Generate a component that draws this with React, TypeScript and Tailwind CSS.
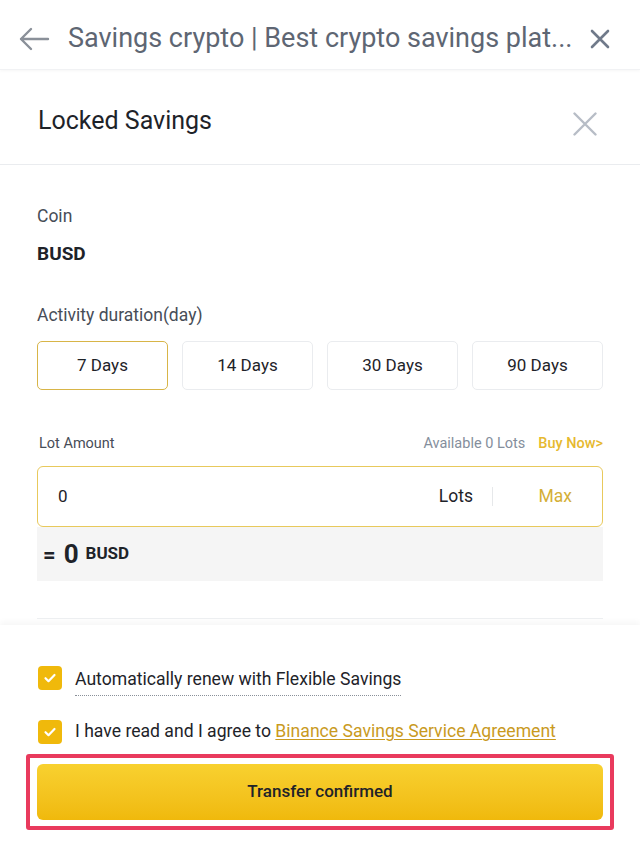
import React, { useState } from 'react';

const durations = ['7 Days', '14 Days', '30 Days', '90 Days'];

function Check() {
  return (
    <span className="flex h-6 w-6 shrink-0 items-center justify-center rounded-[4px] bg-[#f0b90b]">
      <svg width="14" height="14" viewBox="0 0 14 14" fill="none">
        <path d="M2.5 7.2l3 3 6-6.2" stroke="#fff" strokeWidth="2.2" strokeLinecap="round" strokeLinejoin="round" />
      </svg>
    </span>
  );
}

function App() {
  const [duration, setDuration] = useState('7 Days');

  return (
    <div className="flex h-[841px] w-[640px] flex-col overflow-hidden bg-white font-['Roboto','Noto_Sans',sans-serif]">
      <header className="flex h-[70px] shrink-0 items-center border-b border-[#f1f2f4] pl-[18px] pr-[30px] pt-[8px] shadow-[0_1px_3px_rgba(0,0,0,0.04)]">
        <svg width="32" height="24" viewBox="0 0 32 24" fill="none" className="shrink-0">
          <path d="M30 12H3M13 2L3 12l10 10" stroke="#8a9099" strokeWidth="2.4" strokeLinecap="round" strokeLinejoin="round" />
        </svg>
        <h1 className="ml-[18px] flex-1 whitespace-nowrap text-[27px] leading-none text-[#5e6673]">
          Savings crypto | Best crypto savings plat...
        </h1>
        <svg width="20" height="20" viewBox="0 0 20 20" className="shrink-0">
          <path d="M2 2l16 16M18 2L2 18" stroke="#707a8a" strokeWidth="2.6" strokeLinecap="round" />
        </svg>
      </header>

      <div className="flex h-[95px] shrink-0 items-center justify-between border-b border-[#eaecef] pl-[38px] pr-[43px]">
        <h2 className="pt-[8px] text-[25px] text-[#1e2329]">Locked Savings</h2>
        <svg width="24" height="24" viewBox="0 0 24 24" className="mt-[14px]">
          <path d="M1.5 1.5l21 21M22.5 1.5l-21 21" stroke="#b7bdc6" strokeWidth="2.4" strokeLinecap="round" />
        </svg>
      </div>

      <div className="flex flex-1 flex-col px-[37px]">
        <div className="mt-[40px] text-[17.5px] leading-[22px] text-[#474d57]">Coin</div>
        <div className="mt-[15px] text-[19px] font-bold leading-[24px] text-[#1e2329]">BUSD</div>

        <div className="mt-[38px] text-[17.5px] leading-[22px] text-[#474d57]">Activity duration(day)</div>
        <div className="mt-[15px] grid grid-cols-4 gap-[14px]">
          {durations.map(d => (
            <button
              key={d}
              onClick={() => setDuration(d)}
              className={`flex h-[49px] items-center justify-center rounded-[5px] border-[1.5px] text-[17px] text-[#1e2329] ${
                d === duration ? 'border-[#d8b548]' : 'border-[#eaecef]'
              }`}
            >
              {d}
            </button>
          ))}
        </div>

        <div className="mt-[44px] flex items-center justify-between text-[14.5px] leading-[20px]">
          <span className="pl-[2px] text-[#474d57]">Lot Amount</span>
          <span className="text-[#848e9c]">
            Available 0 Lots
            <span className="ml-[13px] font-medium text-[#e6b92f]">Buy Now&gt;</span>
          </span>
        </div>
        <div className="mt-[12px] flex h-[61px] items-center rounded-[6px] border-[1.5px] border-[#e8c95c] pl-[20px] pr-[30px]">
          <span className="flex-1 text-[17px] text-[#1e2329]">0</span>
          <span className="text-[17.5px] text-[#1e2329]">Lots</span>
          <span className="mx-[19px] h-[19px] w-px bg-[#e6e8ea]" />
          <span className="w-[60px] text-right text-[17.5px] text-[#d4af37]">Max</span>
        </div>
        <div className="flex h-[54px] items-center bg-[#f5f5f5] px-[6px] font-bold text-[#1e2329]">
          <span className="text-[22px]">=</span>
          <span className="ml-[8px] text-[26px]">0</span>
          <span className="ml-[7px] text-[17px]">BUSD</span>
        </div>
        <div className="mt-[37px] h-px bg-[#eef0f2]" />
      </div>

      <div className="h-[216px] shrink-0 px-[38px] pt-[35px] shadow-[0_-3px_6px_rgba(0,0,0,0.04)]">
        <div className="flex items-center gap-[13px]">
          <Check />
          <span className="border-b border-dotted border-[#8a9099] pb-[3px] pt-[6px] text-[17.6px] text-[#1e2329]">
            Automatically renew with Flexible Savings
          </span>
        </div>
        <div className="mt-[22px] flex items-center gap-[13px]">
          <Check />
          <span className="text-[17.6px] text-[#1e2329]">
            I have read and I agree to{' '}
            <a className="text-[#c99a1e] underline underline-offset-2">Binance Savings Service Agreement</a>
          </span>
        </div>
        <div className="-mx-[12px] mt-[9px] rounded-[3px] border-[4px] border-[#e93a5d] px-[7px] py-[6px]">
          <button className="flex h-[56px] w-full items-center justify-center rounded-[6px] bg-gradient-to-b from-[#f8d12f] to-[#f0b90b] text-[17px] font-medium text-[#1e2329]">
            Transfer confirmed
          </button>
        </div>
      </div>
    </div>
  );
}

export default App;
